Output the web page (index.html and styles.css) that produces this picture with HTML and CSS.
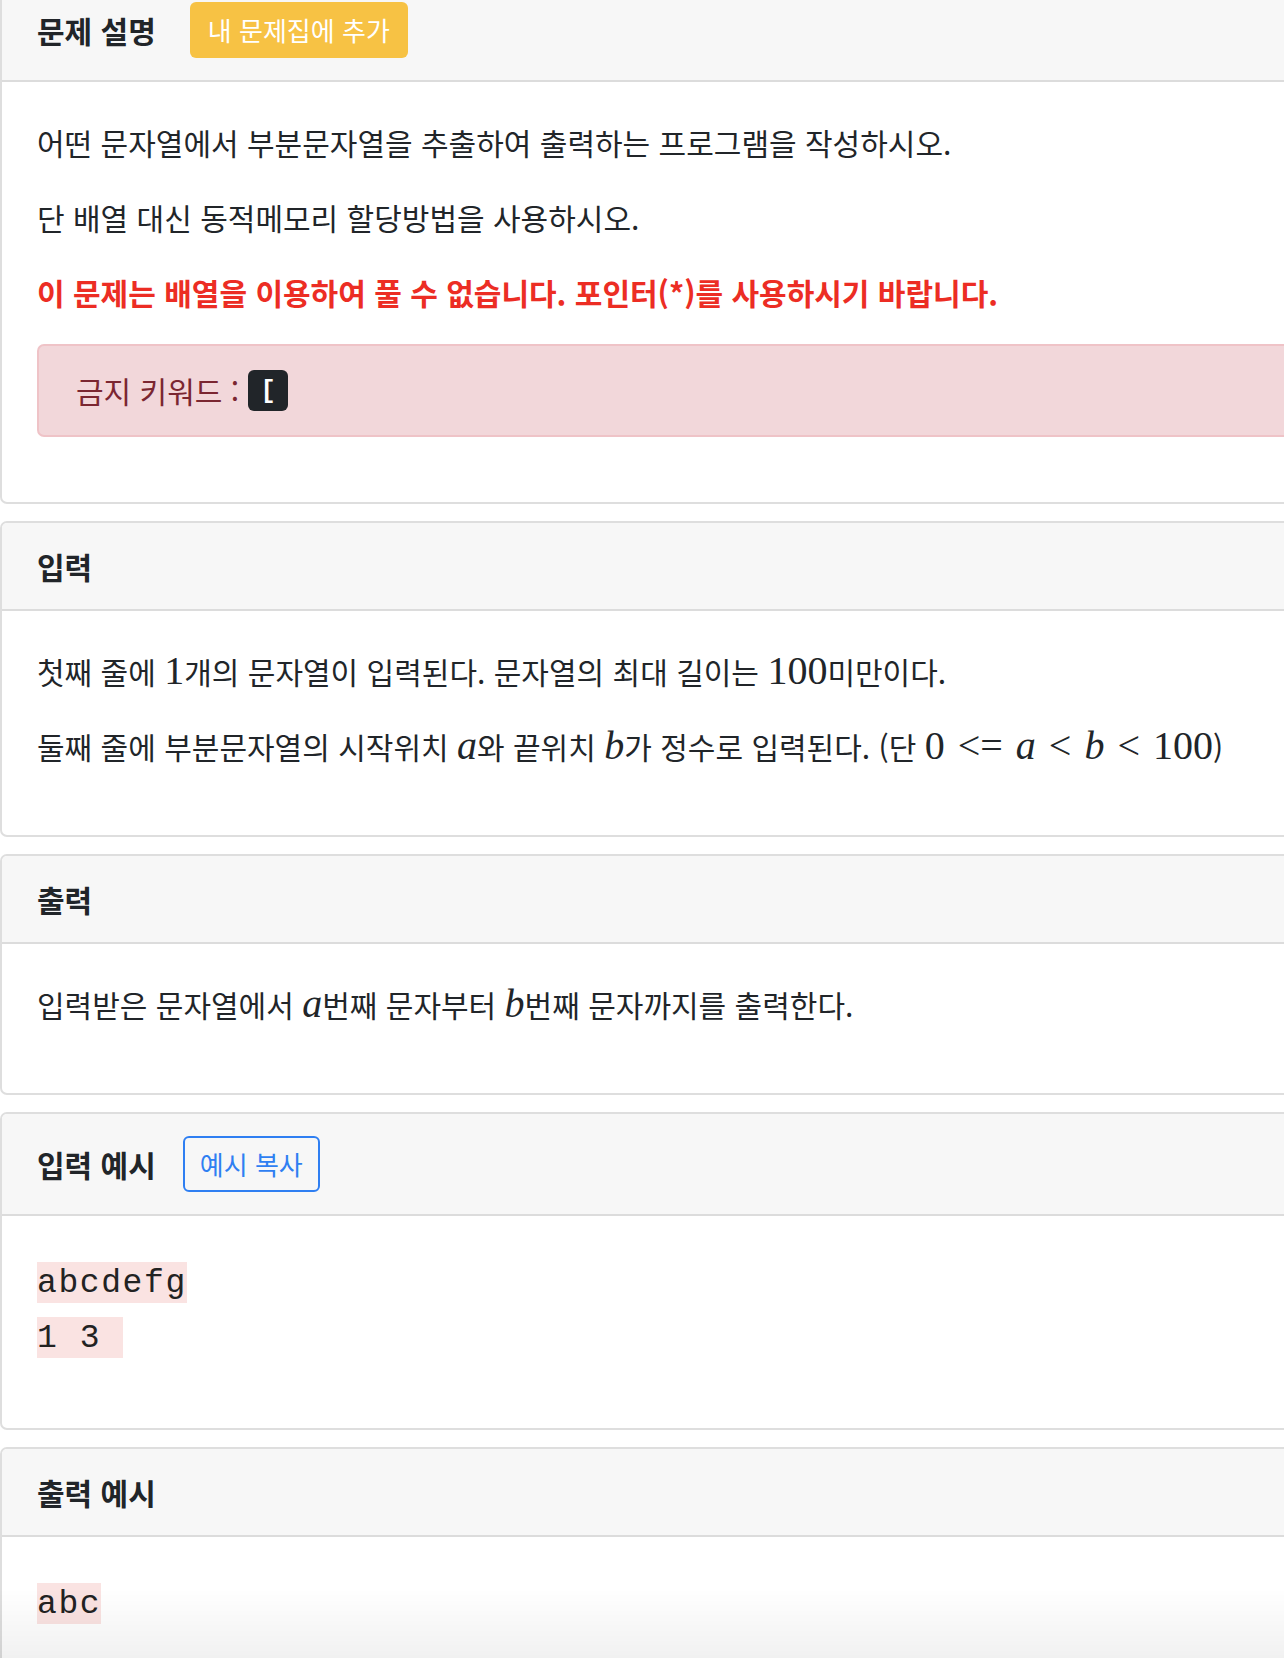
FILE: index.html
```html
<!DOCTYPE html>
<html lang="ko">
<head>
<meta charset="utf-8">
<title>문제</title>
<link rel="stylesheet" href="styles.css">
</head>
<body>
<div class="page">
  <section class="card">
    <div class="card-header">
      <h2 class="title">문제 설명</h2>
      <button class="btn btn-warning">내 문제집에 추가</button>
    </div>
    <div class="card-body">
      <p>어떤 문자열에서 부분문자열을 추출하여 출력하는 프로그램을 작성하시오.</p>
      <p>단 배열 대신 동적메모리 할당방법을 사용하시오.</p>
      <p class="warn">이 문제는 배열을 이용하여 풀 수 없습니다. 포인터(*)를 사용하시기 바랍니다.</p>
      <div class="alert">
        <span class="alert-label">금지 키워드 :</span>
        <code class="kw">[</code>
      </div>
    </div>
  </section>

  <section class="card">
    <div class="card-header">
      <h2 class="title">입력</h2>
    </div>
    <div class="card-body">
      <p>첫째 줄에 <span class="math">1</span>개의 문자열이 입력된다. 문자열의 최대 길이는 <span class="math">100</span>미만이다.</p>
      <p>둘째 줄에 부분문자열의 시작위치 <span class="math"><i>a</i></span>와 끝위치 <span class="math"><i>b</i></span>가 정수로 입력된다. (단 <span class="math">0 <span class="rel rel-l">&lt;</span><span class="rel rel-r">=</span> <i>a</i> <span class="rel">&lt;</span> <i>b</i> <span class="rel">&lt;</span> 100</span>)</p>
    </div>
  </section>

  <section class="card">
    <div class="card-header">
      <h2 class="title">출력</h2>
    </div>
    <div class="card-body">
      <p>입력받은 문자열에서 <span class="math"><i>a</i></span>번째 문자부터 <span class="math"><i>b</i></span>번째 문자까지를 출력한다.</p>
    </div>
  </section>

  <section class="card">
    <div class="card-header">
      <h2 class="title">입력 예시</h2>
      <button class="btn btn-outline">예시 복사</button>
    </div>
    <div class="card-body">
      <div class="sample">
        <span class="sample-line">abcdefg</span>
        <span class="sample-line">1 3 </span>
      </div>
    </div>
  </section>

  <section class="card">
    <div class="card-header">
      <h2 class="title">출력 예시</h2>
    </div>
    <div class="card-body">
      <div class="sample">
        <span class="sample-line">abc</span>
      </div>
    </div>
  </section>
</div>
<div class="bottom-fade"></div>
</body>
</html>
```

FILE: styles.css
```css
html, body {
  margin: 0;
  padding: 0;
  background: #ffffff;
  overflow: hidden;
}

body {
  font-family: "Noto Sans CJK KR", "Noto Sans", sans-serif;
  color: #212529;
  font-size: 30px;
  width: 1284px;
  height: 1658px;
}

.page {
  width: 1340px;
  margin-top: -22px;
  display: flex;
  flex-direction: column;
  gap: 17px;
}

.card {
  border: 2px solid #dedede;
  border-radius: 7px;
  background: #ffffff;
  overflow: hidden;
}

.card-header {
  background: #f7f7f7;
  border-bottom: 2px solid #dcdcdc;
  padding: 22px 35px;
  display: flex;
  align-items: center;
  min-height: 42px;
}

.title {
  margin: 0;
  font-size: 30px;
  font-weight: 700;
  line-height: 42px;
  color: #212529;
}

.btn {
  font-family: "Noto Sans CJK KR", "Noto Sans", sans-serif;
  height: 56px;
  border-radius: 6px;
  display: inline-flex;
  align-items: center;
  justify-content: center;
  cursor: pointer;
  font-size: 26px;
  line-height: 1;
}

.btn-warning {
  margin-left: 34px;
  background: #f7c244;
  border: none;
  color: #ffffff;
  padding: 0 18px;
}

.btn-outline {
  margin-left: 27px;
  background: transparent;
  border: 2px solid #2f7ff2;
  color: #2f7ff2;
  padding: 0 15px;
}

.card-body {
  padding: 37px 35px;
}

.card-body p {
  margin: 0 0 28px 0;
  line-height: 47px;
}

.warn {
  color: #ec2d24;
  font-weight: 700;
}

.math {
  font-family: "Liberation Serif", serif;
  font-size: 40px;
  line-height: 0;
}

.math i {
  font-style: italic;
}

.rel {
  margin: 0 3px;
}

.rel-l {
  margin-right: 0;
}

.rel-r {
  margin-left: 0;
}

.alert {
  display: flex;
  align-items: center;
  gap: 9px;
  margin-bottom: 28px;
  padding: 21px 37px;
  height: 47px;
  background: #f2d7da;
  border: 2px solid #efc3c7;
  border-radius: 7px;
  color: #7b2631;
}

.alert-label {
  line-height: 47px;
}

.kw {
  display: inline-flex;
  align-items: center;
  justify-content: center;
  width: 40px;
  height: 41px;
  background: #212529;
  color: #ffffff;
  border-radius: 6px;
  font-family: "Liberation Mono", monospace;
  font-size: 26px;
  font-weight: 700;
}

.sample {
  display: flex;
  flex-direction: column;
  align-items: flex-start;
  gap: 14px;
  margin: 9px 0 33px 0;
}

.sample-line {
  display: inline-block;
  height: 41px;
  line-height: 44px;
  background: #fae3e2;
  font-family: "Liberation Mono", monospace;
  font-size: 33px;
  letter-spacing: 1.6px;
  color: #222222;
  white-space: pre;
}

.bottom-fade {
  position: fixed;
  left: 0;
  right: 0;
  bottom: 0;
  height: 70px;
  background: linear-gradient(to bottom, rgba(0, 0, 0, 0), rgba(0, 0, 0, 0.055));
  pointer-events: none;
}
```
